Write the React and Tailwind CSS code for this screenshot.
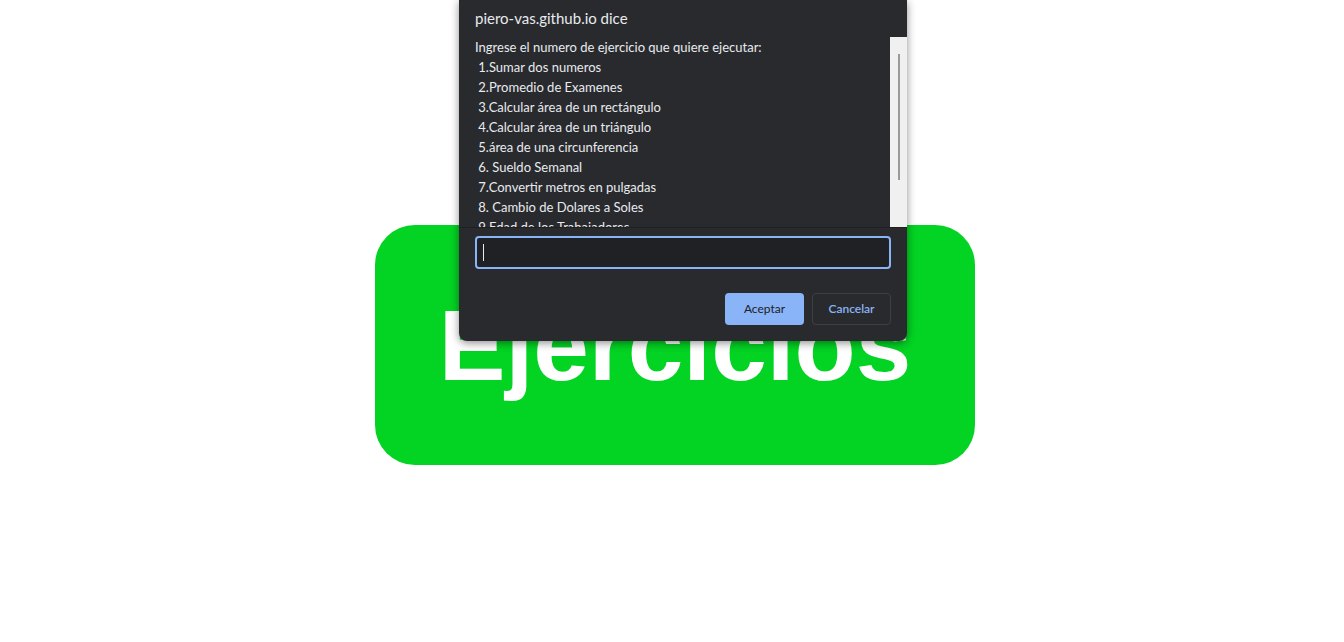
export default function App() {
  const items = [
    ' 1.Sumar dos numeros',
    ' 2.Promedio de Examenes',
    ' 3.Calcular área de un rectángulo',
    ' 4.Calcular área de un triángulo',
    ' 5.área de una circunferencia',
    ' 6. Sueldo Semanal',
    ' 7.Convertir metros en pulgadas',
    ' 8. Cambio de Dolares a Soles',
    ' 9.Edad de los Trabajadores',
    ' 10.Salir',
  ]

  return (
    <div className="relative h-[642px] w-full bg-white overflow-hidden">
      {/* Page content */}
      <div className="flex justify-center pt-[225px] pl-[6px]">
        <div className="flex h-[240px] w-[600px] items-center justify-center rounded-[40px] bg-[#03d323]">
          <span className="text-[100px] font-bold text-white leading-none" style={{ fontFamily: '"Liberation Sans", Arial, sans-serif' }}>
            Ejercicios
          </span>
        </div>
      </div>

      {/* Prompt dialog */}
      <div
        className="absolute left-[459px] top-0 w-[448px] rounded-b-lg bg-[#292a2d] text-[#e8eaed] shadow-[0_2px_8px_rgba(0,0,0,0.45)]"
        style={{ fontFamily: 'Lato, "Noto Sans", sans-serif' }}
      >
        <div className="h-[37px] pl-4 pt-[8px] text-[15px] leading-[20px]">piero-vas.github.io dice</div>

        <div className="flex h-[191px] border-b border-[#1f2023]">
          <div className="flex-1 overflow-hidden pl-4 text-[13px] leading-[20px] whitespace-pre">
            <div>Ingrese el numero de ejercicio que quiere ejecutar:</div>
            {items.map((t) => (
              <div key={t}>{t}</div>
            ))}
          </div>
          <div className="flex w-[17px] justify-center bg-[#f0f0f0] pt-[17px]">
            <div className="h-[126px] w-[2px] bg-[#9a9a9a]" />
          </div>
        </div>

        <div className="px-4 pt-2">
          <div className="flex h-[33px] items-center rounded-[4px] border-2 border-[#8ab4f8] bg-[#202124] pl-[6px]">
            <div className="h-[17px] w-px bg-[#e8eaed]" />
          </div>
        </div>

        <div className="flex justify-end gap-2 px-4 pt-[24px] pb-4">
          <button className="h-[32px] w-[79px] rounded-[4px] bg-[#8ab4f8] text-[12px] text-[#202124]">Aceptar</button>
          <button className="h-[32px] w-[79px] rounded-[4px] border border-[#3c4043] text-[12px] font-semibold text-[#8ab4f8]">
            Cancelar
          </button>
        </div>
      </div>
    </div>
  )
}
